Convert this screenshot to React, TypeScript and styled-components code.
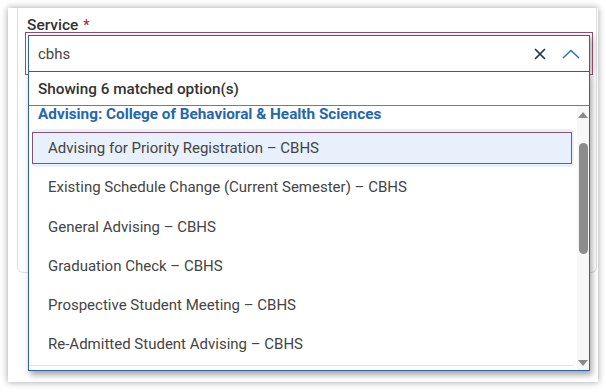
import React from "react";
import styled, { createGlobalStyle } from "styled-components";

const Global = createGlobalStyle`
  html, body { margin: 0; padding: 0; background: #ffffff; }
  body { font-family: Roboto, "Liberation Sans", Arial, sans-serif; }
  * { box-sizing: border-box; }
`;

const Page = styled.div`
  width: 606px;
  height: 392px;
  padding: 8px 8px 10px 8px;
  background: #ffffff;
  overflow: hidden;
`;

const Card = styled.div`
  height: 100%;
  background: #ffffff;
  box-shadow: 0 0 7px rgba(0, 0, 0, 0.38);
  padding: 0 1px 0 9px;
`;

const Panel = styled.div`
  height: 265px;
  border: 1px solid #dedede;
  border-top: none;
  border-radius: 0 0 6px 6px;
  padding: 9px 7px 0 9px;
`;

const Label = styled.div`
  font-size: 15.5px;
  font-weight: 500;
  color: #333333;
  line-height: 16px;
  height: 16px;
  margin-bottom: 2px;
`;

const Star = styled.span`
  color: #b3263a;
  margin-left: 5px;
  font-size: 14px;
`;

const Field = styled.div`
  position: relative;
  width: 562px;
  margin-left: 1px;
`;

const InputBox = styled.div`
  height: 37px;
  border: 1px solid #2f62a2;
  outline: 1px solid #8d4f6e;
  outline-offset: 2px;
  display: flex;
  align-items: center;
  padding: 0 9px 0 9px;
  background: #fff;
  box-shadow: 3px 2px 6px rgba(0, 0, 0, 0.3);
`;

const InputText = styled.div`
  flex: 1;
  font-size: 15px;
  color: #444;
`;

const IconButton = styled.div<{ $gap: number }>`
  display: flex;
  align-items: center;
  justify-content: center;
  margin-left: ${(p) => p.$gap}px;
`;

const Listbox = styled.div`
  position: absolute;
  left: 0;
  top: 37px;
  width: 562px;
  height: 299px;
  border: 1px solid #2f62a2;
  border-top: none;
  background: #fff;
  box-shadow: 2px 4px 6px rgba(0, 0, 0, 0.35);
  display: flex;
  flex-direction: column;
  z-index: 2;
`;

const Status = styled.div`
  height: 34px;
  flex: none;
  border-bottom: 1px solid #7a7a7a;
  font-size: 15.3px;
  font-weight: 500;
  color: #333;
  display: flex;
  align-items: center;
  padding-left: 9px;
  padding-top: 1px;
`;

const Body = styled.div`
  flex: 1;
  display: flex;
  min-height: 0;
`;

const Options = styled.div`
  flex: 1;
  overflow: hidden;
`;

const GroupHeader = styled.div`
  font-size: 15.3px;
  font-weight: 700;
  color: #2566b0;
  line-height: 16px;
  padding-left: 9px;
  height: 23px;
`;

const Option = styled.div<{ $active?: boolean }>`
  position: relative;
  height: 38px;
  margin: 0 3px 1.3px 3px;
  border-radius: 4px;
  padding-left: 16px;
  display: flex;
  align-items: center;
  font-size: 15px;
  color: #444;
  background: ${(p) => (p.$active ? "#e8f0fb" : "transparent")};
  &::after {
    content: "";
    display: ${(p) => (p.$active ? "block" : "none")};
    position: absolute;
    top: 3px;
    bottom: 3px;
    left: 0;
    right: 2px;
    border: 1px solid #8d4f6e;
  }
`;

const Divider = styled.div`
  border-top: 1px solid #dce7f6;
  margin-right: 3px;
`;

const Scroll = styled.div`
  width: 12px;
  flex: none;
  background: #f7f7f7;
  display: flex;
  flex-direction: column;
  align-items: center;
  padding: 6px 0 4px;
`;

const Arrow = styled.div<{ $down?: boolean }>`
  width: 0;
  height: 0;
  border-left: 5px solid transparent;
  border-right: 5px solid transparent;
  ${(p) =>
    p.$down
      ? "border-top: 6px solid #8a8a8a;"
      : "border-bottom: 6px solid #8a8a8a;"}
`;

const Track = styled.div`
  flex: 1;
  width: 100%;
  display: flex;
  justify-content: center;
  padding-top: 25px;
`;

const Thumb = styled.div`
  width: 9px;
  height: 111px;
  border-radius: 5px;
  background: #8c8c8c;
`;

const options = [
  "Advising for Priority Registration \u2013 CBHS",
  "Existing Schedule Change (Current Semester) \u2013 CBHS",
  "General Advising \u2013 CBHS",
  "Graduation Check \u2013 CBHS",
  "Prospective Student Meeting \u2013 CBHS",
  "Re-Admitted Student Advising \u2013 CBHS",
];

export default function App() {
  return (
    <>
      <Global />
      <Page>
        <Card>
          <Panel>
            <Label>
              Service<Star>*</Star>
            </Label>
            <Field>
              <InputBox>
                <InputText>cbhs</InputText>
                <IconButton $gap={0}>
                  <svg width="12" height="12" viewBox="0 0 12 12">
                    <path d="M1 1 L11 11 M11 1 L1 11" stroke="#1f3450" strokeWidth="1.7" fill="none" />
                  </svg>
                </IconButton>
                <IconButton $gap={16}>
                  <svg width="18" height="10" viewBox="0 0 18 10">
                    <path d="M1 9 L9 1.5 L17 9" stroke="#2a70c2" strokeWidth="1.5" fill="none" />
                  </svg>
                </IconButton>
              </InputBox>
              <Listbox>
                <Status>Showing 6 matched option(s)</Status>
                <Body>
                  <Options>
                    <GroupHeader>Advising: College of Behavioral &amp; Health Sciences</GroupHeader>
                    {options.map((o, i) => (
                      <Option key={o} $active={i === 0}>
                        {o}
                      </Option>
                    ))}
                    <Divider />
                  </Options>
                  <Scroll>
                    <Arrow />
                    <Track>
                      <Thumb />
                    </Track>
                    <Arrow $down />
                  </Scroll>
                </Body>
              </Listbox>
            </Field>
          </Panel>
        </Card>
      </Page>
    </>
  );
}
